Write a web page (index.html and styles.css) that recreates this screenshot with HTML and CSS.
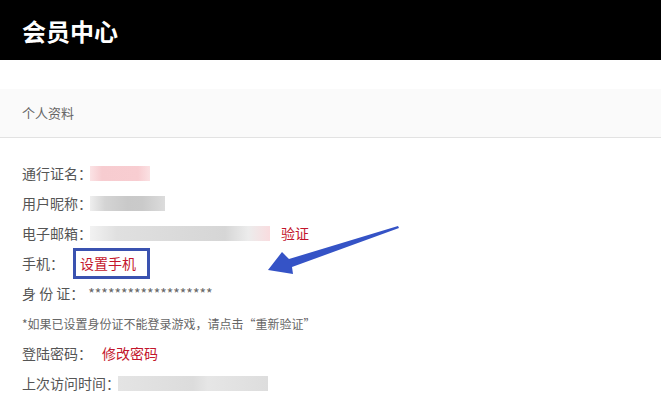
FILE: index.html
```html
<!DOCTYPE html>
<html lang="zh-CN">
<head>
  <meta charset="UTF-8" />
  <title>会员中心</title>
  <link rel="stylesheet" href="styles.css">
</head>
<body>
  <header class="top">
    <h1>会员中心</h1>
  </header>

  <div class="tab">个人资料</div>

  <main class="info">
    <div class="row">通行证名：<span class="blur pink" style="width:60px"></span></div>
    <div class="row">用户昵称：<span class="blur gray" style="width:75px"></span></div>
    <div class="row">电子邮箱：<span class="blur gray fade" style="width:180px"></span><a class="red verify" href="#">验证</a></div>
    <div class="row">手机：<span class="mark"><a class="red" href="#">设置手机</a></span></div>
    <div class="row">身 份 证：<span class="stars">*******************</span></div>
    <div class="row note">*如果已设置身份证不能登录游戏，请点击“重新验证”</div>
    <div class="row">登陆密码：<a class="red pwd" href="#">修改密码</a></div>
    <div class="row">上次访问时间：<span class="blur light" style="width:150px"></span></div>

    <svg class="arrow" width="136" height="76" viewBox="0 0 136 76">
      <path d="M132 22 L23 55 L16 48 L2 66 L27 70 L26 63 L133 24 Z" fill="#3553c6" />
    </svg>
  </main>
</body>
</html>
```

FILE: styles.css
```css
body {
  margin: 0;
  font-family: "Noto Sans CJK SC", "Microsoft YaHei", sans-serif;
  background: #fff;
  color: #555;
}

.top {
  background: #000;
  height: 60px;
  display: flex;
  align-items: center;
  padding-left: 22px;
}

.top h1 {
  margin: 0;
  color: #fff;
  font-size: 24px;
  font-weight: bold;
}

.tab {
  margin-top: 29px;
  background: #fafafa;
  border-bottom: 1px solid #e2e2e2;
  height: 48px;
  line-height: 48px;
  padding-left: 22px;
  font-size: 13px;
  color: #666;
}

.info {
  position: relative;
  padding: 20px 22px 0;
  font-size: 14px;
}

.row {
  height: 30px;
  display: flex;
  align-items: center;
  white-space: pre;
}

.blur {
  display: inline-block;
  height: 15px;
  margin-left: -2px;
}

.pink {
  background: linear-gradient(90deg, #fbe3e5, #f7ccd0 20%, #f8cdd1 80%, #fbe1e3);
}

.gray {
  background: linear-gradient(90deg, #eee, #d4d4d4 20%, #c9c9c9 50%, #cacaca 70%, #dcdcdc);
}

.fade {
  background: linear-gradient(90deg, #f2f2f2, #e0e0e0 15%, #dadada 50%, #d6d6d6 75%, #ececec 88%, #f9dcdf);
}

.light {
  background: linear-gradient(90deg, #e4e4e4, #dcdcdc 50%, #e6e6e6 60%, #dddddd);
}

.red {
  color: #c3162c;
  text-decoration: none;
}

.verify {
  margin-left: 11px;
}

.mark {
  display: inline-flex;
  align-items: center;
  height: 25px;
  padding: 0 11px 0 4px;
  margin-left: 9px;
  border: 3px solid #3a52b0;
}

.stars {
  color: #666;
  margin-left: 4px;
}

.note {
  font-size: 12px;
  color: #666;
}

.pwd {
  margin-left: 10px;
}

.arrow {
  position: absolute;
  left: 266px;
  top: 66px;
}
```
